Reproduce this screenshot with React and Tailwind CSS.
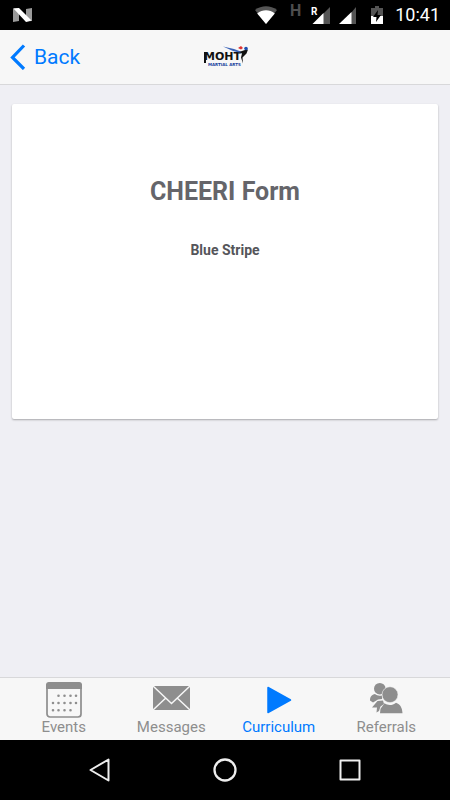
import React, { useState } from 'react';

// Icons for the bottom tabs
const EventsIcon = () => (
  <svg width="38" height="38" viewBox="0 0 38 38" aria-hidden="true">
    <rect x="2" y="2" width="34" height="34" rx="3" fill="none" stroke="currentColor" strokeWidth="1.7" />
    <path d="M1 8V4a3 3 0 0 1 3-3h30a3 3 0 0 1 3 3v4z" fill="currentColor" />
    <path
      d="M13.5 14.7h.01M19.5 14.7h.01M25.5 14.7h.01M31 14.7h.01M8 22h.01M13.5 22h.01M19.5 22h.01M25.5 22h.01M31 22h.01M8 29.3h.01M13.5 29.3h.01M19.5 29.3h.01M25.5 29.3h.01"
      stroke="currentColor"
      strokeWidth="2.6"
      strokeLinecap="round"
    />
  </svg>
);

const MessagesIcon = () => (
  <svg width="38" height="38" viewBox="0 0 38 38" aria-hidden="true">
    <rect x="1" y="5" width="37" height="24" fill="currentColor" />
    <path d="M1 5l18.5 17.5L38 5M1 29l12.8-12M38 29L25.2 17" fill="none" stroke="#f7f7f7" strokeWidth="1.5" />
  </svg>
);

const CurriculumIcon = () => (
  <svg width="38" height="38" viewBox="0 0 38 38" aria-hidden="true">
    <path d="M8 6.5v25l22.5-12.5z" fill="currentColor" stroke="currentColor" strokeWidth="1.5" strokeLinejoin="round" />
  </svg>
);

const ReferralsIcon = () => (
  <svg width="38" height="38" viewBox="0 0 38 38" aria-hidden="true">
    <g fill="currentColor">
      <circle cx="12.8" cy="7.7" r="5.8" />
      <path d="M3 19.5c0-4 2-6 5-6.5 2 1.7 4 2 7 1.5v3.5l-4 .5-5 3z" />
      <path d="M5 26.5l5.5-6.5 5.5-.5 1 3.5-3.5 2.5-1.5 4.5-2.5 1.5.5-5z" />
      <circle cx="23" cy="13.7" r="8" stroke="#f7f7f7" strokeWidth="0.6" />
      <path d="M13 32.3l.5-4.500 4-5.500c3.300 2.400 8 2.400 11.500-.6 4.300 1.600 6.300 5.100 6.500 10.600z" />
    </g>
  </svg>
);

const tabs = [
  { name: 'Events', Icon: EventsIcon },
  { name: 'Messages', Icon: MessagesIcon },
  { name: 'Curriculum', Icon: CurriculumIcon },
  { name: 'Referrals', Icon: ReferralsIcon },
];

const StatusBar = () => (
  <div className="flex h-[30px] shrink-0 items-center bg-black pr-2.5 pl-3 text-white">
    <svg width="20" height="18" viewBox="0 0 20 18" aria-hidden="true">
      <path d="M1 2.5l6-.5v13l-6 1zM14 3l6-1v13l-6 .5z" fill="#9a9a9a" />
      <path d="M1.5 2.5L7 2l12.500 12.500-5.500 1.500z" fill="#fff" />
    </svg>
    <div className="ml-auto flex items-center">
      {/* Wifi */}
      <svg width="24" height="20" viewBox="0 0 24 20" aria-hidden="true">
        <path d="M1 5C7.5 0 16.5 0 23 5L12 19z" fill="#555" />
        <path d="M3.2 8.5c5.3-4.200 12.300-4.200 17.600 0L12 19z" fill="#fff" />
      </svg>
      <span className="mr-2.5 ml-3 pb-2 font-['Roboto'] text-base leading-4 font-bold text-[#4d4d4d]">H</span>
      {/* Signal, roaming */}
      <svg width="20" height="20" viewBox="0 0 20 20" aria-hidden="true">
        <path d="M19 2v17h-7V9z" fill="#555" />
        <path d="M12.5 8v11H1.5z" fill="#fff" />
        <text x="0" y="10" fontSize="10" fontWeight="700" fontFamily="Roboto, sans-serif" fill="#fff">R</text>
      </svg>
      {/* Signal */}
      <svg className="ml-2" width="18" height="20" viewBox="0 0 18 20" aria-hidden="true">
        <path d="M17 2v17h-5V8z" fill="#555" />
        <path d="M12.5 7v12H0z" fill="#fff" />
      </svg>
      {/* Battery */}
      <svg className="mr-3 ml-3.5" width="12" height="20" viewBox="0 0 12 20" aria-hidden="true">
        <path d="M4 1h4v2h4v10H0V3h4z" fill="#555" />
        <path d="M0 11h12v8H0z" fill="#fff" />
        <path d="M7 5l-5 7h3.5L5 17l5-7H6.5z" fill="#000" />
      </svg>
      <span className="font-['Roboto'] text-lg leading-5">10:41</span>
    </div>
  </div>
);

const Logo = () => (
  <svg width="50" height="24" viewBox="0 0 50 24" role="img" aria-label="MOHT Martial Arts">
    <text x="4" y="15" fontSize="11" fontWeight="700" fontFamily="DejaVu Sans, sans-serif" fill="#111">MOHT</text>
    <path d="M4 7h2v11H4z" fill="#111" />
    <text x="8" y="21" fontSize="4" fontWeight="700" fontFamily="DejaVu Sans, sans-serif" fill="#16419c">MARTIAL ARTS</text>
    {/* Kicking figure over the last letter */}
    <path d="M23 1.5L34 4l8 3-1 1L33 6z" fill="#3a62b8" />
    <path d="M39 7l6-2 3-.5-1.500 4-4 4 .5 6-2-6 1-4z" fill="#111" />
    <path d="M38 3l3-2 2 2-2 1.500z" fill="#d33" />
    <circle cx="46" cy="3.5" r="1.8" fill="#1d4fb0" />
  </svg>
);

const App = () => {
  const [active, setActive] = useState('Curriculum');  // Currently selected tab

  return (
    <div className="flex min-h-screen flex-col bg-[#efeff4] font-['Roboto',sans-serif]">
      <StatusBar />

      {/* Navigation bar */}
      <header className="grid h-[55px] shrink-0 grid-cols-3 items-center border-b border-[#d8d8da] bg-[#f7f7f7] px-2.5">
        <button type="button" className="flex items-center gap-2 justify-self-start text-[21px] leading-7 text-[#007aff]">
          <svg width="16" height="26" viewBox="0 0 16 26" aria-hidden="true">
            <path d="M14 1.5L2.5 13.5 14 25" fill="none" stroke="currentColor" strokeWidth="3.2" />
          </svg>
          Back
        </button>
        <div className="justify-self-center">
          <Logo />
        </div>
      </header>

      <main className="flex-1 px-3 pt-[19px]">
        <section className="flex min-h-[315px] flex-col items-center rounded-xs bg-white pt-18 text-center text-[#65656a] shadow-[0_1px_2px_rgba(0,0,0,0.3)]">
          <h1 className="text-[25px] leading-8 font-bold">CHEERI Form</h1>
          <h2 className="mt-8 text-sm leading-5 font-bold text-[#55555a]">Blue Stripe</h2>
        </section>
      </main>

      {/* Bottom tabs */}
      <nav className="grid h-[63px] shrink-0 grid-cols-4 border-t border-[#d8d8da] bg-[#f7f7f7] px-2.5">
        {tabs.map(({ name, Icon }) => (
          <button
            key={name}
            type="button"
            onClick={() => setActive(name)}
            className={`flex flex-col items-center pt-[3px] text-[15px] leading-4 ${active === name ? 'text-[#007aff]' : 'text-[#8e8e8e]'}`}
          >
            <Icon />
            {name}
          </button>
        ))}
      </nav>

      {/* Android system buttons */}
      <div className="flex h-15 shrink-0 items-center justify-around bg-black px-[37px] text-[#eee]">
        <button type="button" aria-label="Back">
          <svg width="26" height="26" viewBox="0 0 26 26" fill="none" stroke="currentColor" strokeWidth="2" strokeLinejoin="round" aria-hidden="true">
            <path d="M21.5 2.5v21L3.5 13z" />
          </svg>
        </button>
        <button type="button" aria-label="Home">
          <svg width="26" height="26" viewBox="0 0 26 26" fill="none" stroke="currentColor" strokeWidth="2.3" aria-hidden="true">
            <circle cx="13" cy="13" r="10.5" />
          </svg>
        </button>
        <button type="button" aria-label="Recent apps">
          <svg width="26" height="26" viewBox="0 0 26 26" fill="none" stroke="currentColor" strokeWidth="2" strokeLinejoin="round" aria-hidden="true">
            <rect x="3.5" y="3.5" width="19" height="19" />
          </svg>
        </button>
      </div>
    </div>
  );
};

export default App;
